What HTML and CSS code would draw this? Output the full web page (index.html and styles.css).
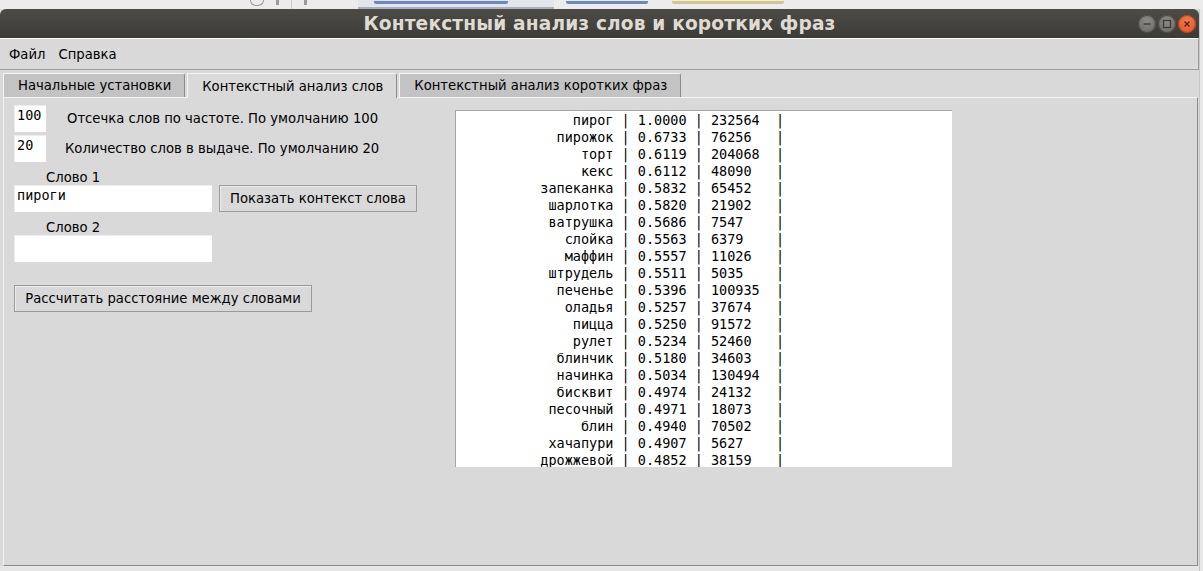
FILE: index.html
```html
<!DOCTYPE html>
<html lang="ru">
<head>
<meta charset="utf-8">
<title>Контекстный анализ слов и коротких фраз</title>
<link rel="stylesheet" href="styles.css">
</head>
<body>
<div class="ide-top">
  <div class="ide-icons"><span class="ico"></span><span class="ico small"></span><span class="sep"></span><span class="ico small"></span></div>
  <div class="ide-tab active"><span class="frag blue w140"></span></div>
  <div class="ide-tab"><span class="frag blue w80"></span></div>
  <div class="ide-tab"><span class="frag olive w110"></span></div>
</div>
<div class="screen">
  <div class="window">
    <div class="titlebar">
      <div class="tb-side"></div>
      <div class="title">Контекстный анализ слов и коротких фраз</div>
      <div class="tb-side tb-buttons">
        <span class="wbtn gray"><svg viewBox="0 0 16 16" width="16" height="16"><path d="M4.5 8h7" stroke="#3a3935" stroke-width="1.4"/></svg></span>
        <span class="wbtn gray"><svg viewBox="0 0 16 16" width="16" height="16"><rect x="4.5" y="4.5" width="7" height="7" fill="none" stroke="#3a3935" stroke-width="1.2"/></svg></span>
        <span class="wbtn close"><svg viewBox="0 0 16 16" width="16" height="16"><path d="M5.5 5.5l5 5M10.5 5.5l-5 5" stroke="#3c2a22" stroke-width="1.4"/></svg></span>
      </div>
    </div>
    <div class="menubar">
      <span class="menu">Файл</span>
      <span class="menu">Справка</span>
    </div>
    <div class="tabs">
      <div class="tab">Начальные установки</div>
      <div class="tab active">Контекстный анализ слов</div>
      <div class="tab">Контекстный анализ коротких фраз</div>
    </div>
    <div class="panel">
      <div class="form">
        <div class="row first">
          <div class="entry short">100</div>
          <span class="lbl l1">Отсечка слов по частоте. По умолчанию 100</span>
        </div>
        <div class="row second">
          <div class="entry short">20</div>
          <span class="lbl l2">Количество слов в выдаче. По умолчанию 20</span>
        </div>
        <div class="caption">Слово 1</div>
        <div class="row">
          <div class="entry wide">пироги</div>
          <button class="btn show">Показать контекст слова</button>
        </div>
        <div class="caption">Слово 2</div>
        <div class="entry wide"></div>
        <button class="btn calc">Рассчитать расстояние между словами</button>
      </div>
      <div class="output">
        <div class="line"><span class="w">пирог</span> | 1.0000 | <span class="n">232564</span> |</div>
        <div class="line"><span class="w">пирожок</span> | 0.6733 | <span class="n">76256</span> |</div>
        <div class="line"><span class="w">торт</span> | 0.6119 | <span class="n">204068</span> |</div>
        <div class="line"><span class="w">кекс</span> | 0.6112 | <span class="n">48090</span> |</div>
        <div class="line"><span class="w">запеканка</span> | 0.5832 | <span class="n">65452</span> |</div>
        <div class="line"><span class="w">шарлотка</span> | 0.5820 | <span class="n">21902</span> |</div>
        <div class="line"><span class="w">ватрушка</span> | 0.5686 | <span class="n">7547</span> |</div>
        <div class="line"><span class="w">слойка</span> | 0.5563 | <span class="n">6379</span> |</div>
        <div class="line"><span class="w">маффин</span> | 0.5557 | <span class="n">11026</span> |</div>
        <div class="line"><span class="w">штрудель</span> | 0.5511 | <span class="n">5035</span> |</div>
        <div class="line"><span class="w">печенье</span> | 0.5396 | <span class="n">100935</span> |</div>
        <div class="line"><span class="w">оладья</span> | 0.5257 | <span class="n">37674</span> |</div>
        <div class="line"><span class="w">пицца</span> | 0.5250 | <span class="n">91572</span> |</div>
        <div class="line"><span class="w">рулет</span> | 0.5234 | <span class="n">52460</span> |</div>
        <div class="line"><span class="w">блинчик</span> | 0.5180 | <span class="n">34603</span> |</div>
        <div class="line"><span class="w">начинка</span> | 0.5034 | <span class="n">130494</span> |</div>
        <div class="line"><span class="w">бисквит</span> | 0.4974 | <span class="n">24132</span> |</div>
        <div class="line"><span class="w">песочный</span> | 0.4971 | <span class="n">18073</span> |</div>
        <div class="line"><span class="w">блин</span> | 0.4940 | <span class="n">70502</span> |</div>
        <div class="line"><span class="w">хачапури</span> | 0.4907 | <span class="n">5627</span> |</div>
        <div class="line"><span class="w">дрожжевой</span> | 0.4852 | <span class="n">38159</span> |</div>
      </div>
    </div>
  </div>
  <div class="ide-right"></div>
</div>
</body>
</html>
```
FILE: styles.css
```css
html, body {
  margin: 0;
  padding: 0;
}
body {
  width: 1203px;
  height: 571px;
  overflow: hidden;
  background: #e6e6e6;
  font-family: "DejaVu Sans", "Liberation Sans", sans-serif;
  color: #000;
}

/* background IDE fragments */
.ide-top {
  height: 9px;
  display: flex;
  align-items: flex-start;
  background: #ececec;
  overflow: hidden;
}
.ide-icons {
  margin-left: 250px;
  width: 100px;
  display: flex;
  gap: 12px;
  align-items: flex-start;
}
.ico {
  width: 12px;
  height: 5px;
  border: 1px solid #9a9a9a;
  border-top: none;
  border-radius: 0 0 6px 6px;
}
.ico.small { width: 3px; border-radius: 0; border: none; background: #9a9a9a; }
.sep { width: 1px; height: 9px; background: #cccccc; }
.ide-tab {
  height: 9px;
  padding: 0 12px;
  display: flex;
  align-items: flex-start;
}
.ide-tab.active {
  margin-left: 8px;
  width: 196px;
  background: #e2e5ea;
  border-bottom: 2px solid #a8b0bc;
  box-sizing: border-box;
  padding: 0 0 0 16px;
}
.frag {
  height: 3px;
  margin-top: 1px;
  border-radius: 0 0 2px 2px;
  opacity: 0.8;
}
.frag.blue { background: #4f6fb8; }
.frag.olive { background: #cdbb72; }
.w140 { width: 134px; }
.w80 { width: 82px; }
.w110 { width: 112px; }

.screen {
  display: flex;
  align-items: flex-start;
}
.ide-right {
  flex: 1;
  height: 562px;
  background: #e8e8e8;
  border-left: 1px solid #c8c8c8;
}

/* window */
.window {
  width: 1199px;
  background: #d9d9d9;
  display: flex;
  flex-direction: column;
}
.titlebar {
  height: 29px;
  border-radius: 6px 6px 0 0;
  background: linear-gradient(#4c4b46, #3c3b37);
  display: grid;
  grid-template-columns: 1fr auto 1fr;
  align-items: center;
}
.title {
  color: #dfdbd2;
  font-weight: bold;
  font-size: 18.6px;
  letter-spacing: 0.15px;
}
.tb-buttons {
  display: flex;
  justify-content: flex-end;
  gap: 2px;
  padding-right: 3px;
  padding-top: 1px;
}
.wbtn {
  width: 18px;
  height: 18px;
  border-radius: 50%;
  display: flex;
  align-items: center;
  justify-content: center;
}
.wbtn.gray {
  background: radial-gradient(circle at 50% 35%, #8b8a85, #66655f);
  box-shadow: inset 0 0 0 1px #4a4945;
}
.wbtn.close {
  background: radial-gradient(circle at 50% 35%, #f47a4e, #e0501d);
  box-shadow: inset 0 0 0 1px #a8401a;
}

.menubar {
  height: 32px;
  box-sizing: border-box;
  border-top: 1px solid #ffffff;
  border-bottom: 1px solid #9c9c9c;
  border-right: 1px solid #9c9c9c;
  display: flex;
  align-items: center;
  padding-left: 9px;
  gap: 13px;
  font-size: 13.2px;
}

.tabs {
  display: flex;
  align-items: flex-end;
  padding: 3px 0 0 3px;
  height: 27px;
  box-sizing: border-box;
  gap: 2px;
}
.tab {
  height: 24px;
  box-sizing: border-box;
  padding: 0 13px 0 14px;
  display: flex;
  align-items: center;
  background: #c3c3c3;
  border-top: 1px solid #f4f4f4;
  border-left: 1px solid #f4f4f4;
  border-right: 1px solid #8c8c8c;
  border-radius: 0 3px 0 0;
  font-size: 13.2px;
}
.tab.active {
  background: #d9d9d9;
  height: 25px;
  margin-bottom: -1px;
  position: relative;
  z-index: 1;
}

.panel {
  margin-left: 3px;
  margin-right: 1px;
  height: 469px;
  box-sizing: border-box;
  border-top: 1px solid #f4f4f4;
  border-left: 1px solid #f0f0f0;
  border-right: 1px solid #8c8c8c;
  border-bottom: 1px solid #8c8c8c;
  padding: 7px 0 0 10px;
  display: flex;
  align-items: flex-start;
  font-size: 13.2px;
}

.form {
  width: 441px;
  display: flex;
  flex-direction: column;
  align-items: flex-start;
}
.row {
  display: flex;
  align-items: center;
}
.row.second { margin-top: 3px; }
.entry {
  height: 27px;
  box-sizing: border-box;
  background: #fff;
  border-top: 1px solid #ededed;
  border-left: 1px solid #ededed;
  font-family: "DejaVu Sans Mono", monospace;
  font-size: 13.5px;
  line-height: 17px;
  padding: 1px 0 0 2px;
}
.entry.short { width: 32px; }
.entry.wide { width: 198px; }
.lbl.l1 { margin-left: 21px; }
.lbl.l2 { margin-left: 19px; }
.caption {
  margin-top: 8px;
  margin-left: 32px;
  height: 15px;
  line-height: 15px;
}
.btn {
  height: 27px;
  box-sizing: border-box;
  background: #d9d9d9;
  border: 1px solid #9a9a9a;
  box-shadow: inset 1px 1px 0 #ececec;
  font-family: "DejaVu Sans", sans-serif;
  font-size: 13.2px;
  color: #000;
  padding: 0;
  margin: 0;
}
.btn.show {
  width: 198px;
  margin-left: 7px;
}
.btn.calc {
  width: 298px;
  margin-top: 23px;
}

.output {
  margin-top: 5px;
  width: 497px;
  height: 357px;
  box-sizing: border-box;
  background: #fff;
  border-top: 1px solid #a6a6a6;
  border-left: 1px solid #a6a6a6;
  padding: 1px 0 0 3px;
  overflow: hidden;
  font-family: "DejaVu Sans Mono", monospace;
  font-size: 13.5px;
  line-height: 17px;
}
.line {
  white-space: pre;
  height: 17px;
}
.line .w {
  display: inline-block;
  width: 19ch;
  text-align: right;
}
.line .n {
  display: inline-block;
  width: 7ch;
}
```
